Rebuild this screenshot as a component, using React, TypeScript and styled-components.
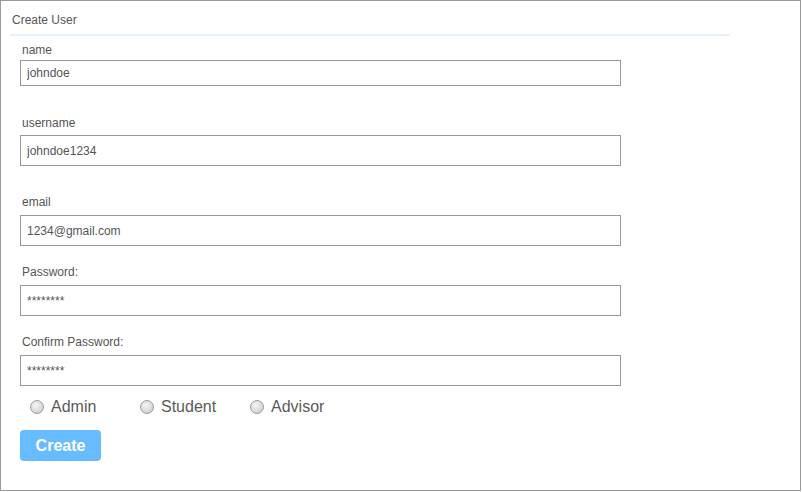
import React from "react";
import styled, { createGlobalStyle } from "styled-components";

const Global = createGlobalStyle`
  html, body { margin: 0; padding: 0; background: #fff; }
  body { font-family: "Liberation Sans", Arial, sans-serif; }
  * { box-sizing: border-box; }
`;

const Panel = styled.div`
  width: 801px;
  height: 491px;
  border: 1px solid #9a9a9a;
  background: #fff;
`;

const Header = styled.div`
  width: 720px;
  margin-left: 9px;
  padding: 12px 0 7px 2px;
  border-bottom: 2px solid #e6f1fc;
  font-size: 12px;
  line-height: 14px;
  color: #555;
`;

const Form = styled.form`
  display: flex;
  flex-direction: column;
  padding-left: 19px;
`;

const Field = styled.div<{ $space: number }>`
  display: flex;
  flex-direction: column;
  margin-top: ${(p) => p.$space}px;
`;

const Label = styled.label<{ $gap: number }>`
  font-size: 12px;
  line-height: 14px;
  color: #555;
  padding-left: 2px;
  margin-bottom: ${(p) => p.$gap}px;
`;

const Input = styled.input<{ $h: number }>`
  width: 601px;
  height: ${(p) => p.$h}px;
  border: 1px solid #999;
  border-radius: 0;
  padding: 0 6px;
  font-family: "Liberation Sans", Arial, sans-serif;
  font-size: 12px;
  color: #555;
  background: #fff;
  outline: none;
`;

const RadioRow = styled.div`
  display: flex;
  align-items: center;
  height: 20px;
  margin-top: 11px;
`;

const Option = styled.label`
  display: flex;
  align-items: center;
  width: 110px;
  padding-left: 10px;
  font-size: 16px;
  line-height: 20px;
  color: #5a5a5a;
`;

const Circle = styled.span`
  width: 14px;
  height: 14px;
  border-radius: 50%;
  border: 1px solid #9c9c9c;
  background: radial-gradient(circle at 40% 35%, #f4f4f4 0%, #dcdcdc 55%, #c4c4c4 100%);
  margin-right: 7px;
  flex: none;
`;

const Button = styled.button`
  margin-top: 13px;
  width: 81px;
  height: 31px;
  border: none;
  border-radius: 4px;
  background: #66bcff;
  color: #fff;
  font-family: "Liberation Sans", Arial, sans-serif;
  font-weight: bold;
  font-size: 16px;
  padding: 0;
  align-self: flex-start;
`;

const fields = [
  { label: "name", value: "johndoe", space: 7, gap: 3, h: 26 },
  { label: "username", value: "johndoe1234", space: 30, gap: 5, h: 31 },
  { label: "email", value: "1234@gmail.com", space: 29, gap: 6, h: 31 },
  { label: "Password:", value: "********", space: 19, gap: 6, h: 31 },
  { label: "Confirm Password:", value: "********", space: 19, gap: 6, h: 31 },
];

export default function App() {
  return (
    <>
      <Global />
      <Panel>
        <Header>Create User</Header>
        <Form onSubmit={(e) => e.preventDefault()}>
          {fields.map((f) => (
            <Field key={f.label} $space={f.space}>
              <Label $gap={f.gap}>{f.label}</Label>
              <Input $h={f.h} defaultValue={f.value} readOnly />
            </Field>
          ))}
          <RadioRow>
            {["Admin", "Student", "Advisor"].map((r) => (
              <Option key={r}>
                <Circle />
                {r}
              </Option>
            ))}
          </RadioRow>
          <Button type="button">Create</Button>
        </Form>
      </Panel>
    </>
  );
}
